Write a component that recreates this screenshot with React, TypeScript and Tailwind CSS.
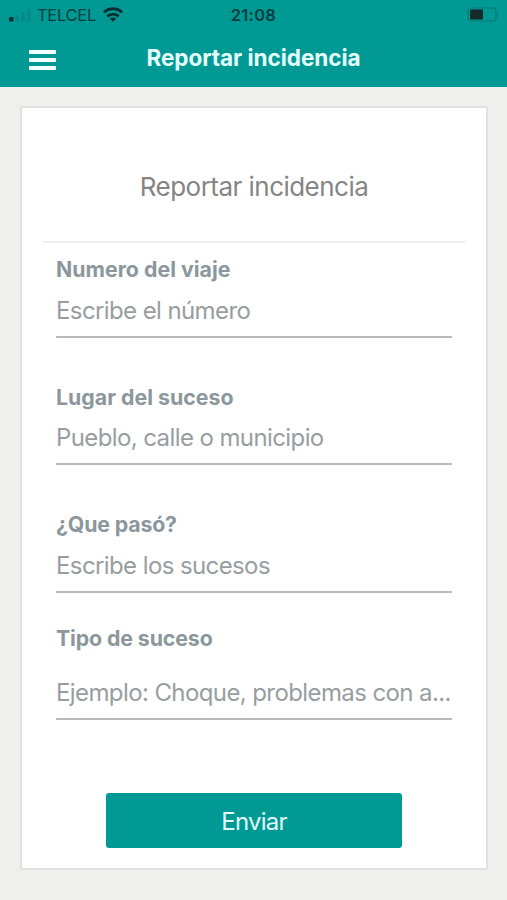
import { clsx } from "clsx";

const fields = [
  {
    id: "viaje",
    label: "Numero del viaje",
    placeholder: "Escribe el número",
    box: "h-[95px]",
    labelClass: "mt-[12px] tracking-[0.02px]",
  },
  {
    id: "lugar",
    label: "Lugar del suceso",
    placeholder: "Pueblo, calle o municipio",
    box: "h-[127px]",
    labelClass: "mt-[45px] tracking-[0.03px]",
  },
  {
    id: "descripcion",
    label: "¿Que pasó?",
    placeholder: "Escribe los sucesos",
    box: "h-[128px]",
    labelClass: "mt-[45px] tracking-[-0.15px]",
  },
  {
    id: "tipo",
    label: "Tipo de suceso",
    placeholder: "Ejemplo: Choque, problemas con a...",
    box: "h-[127px]",
    labelClass: "mt-[31px] tracking-[-0.1px]",
  },
];

function SignalIcon() {
  return (
    <svg width="24" height="14" viewBox="0 0 24 14" fill="#06403d">
      <rect x="1" y="9" width="4.5" height="4.5" rx="1.2" fill="#0b2f2e" />
      <rect x="7" y="7" width="4" height="6.5" rx="1" opacity="0.14" />
      <rect x="13" y="4" width="4" height="9.5" rx="1" opacity="0.14" />
      <rect x="19" y="1" width="4" height="12.5" rx="1" opacity="0.14" />
    </svg>
  );
}

function WifiIcon() {
  return (
    <svg width="20" height="15" viewBox="0 0 20 15" fill="none" stroke="#0a2e2d" strokeWidth="2.9">
      <path d="M1 5.5a12.8 12.8 0 0 1 18 0" />
      <path d="M4.4 9.4a8 8 0 0 1 11.2 0" />
      <path d="M10 14.8 6.9 11.7a4.4 4.4 0 0 1 6.2 0z" fill="#0a2e2d" stroke="none" />
    </svg>
  );
}

function BatteryIcon() {
  return (
    <svg width="32" height="16" viewBox="0 0 32 16" fill="none">
      <rect x="1" y="1" width="28" height="13" rx="3" stroke="#087a75" strokeWidth="1.2" />
      <rect x="3" y="2.5" width="13" height="10" rx="1.2" fill="#172a2a" />
      <path d="M30.6 5.5v4.5" stroke="#08807a" strokeWidth="1.2" />
    </svg>
  );
}

export default function App() {
  return (
    <main className="flex h-[900px] w-[507px] flex-col overflow-hidden bg-[#efefed] font-['Inter','Liberation_Sans',sans-serif]">
      <header className="h-[87px] shrink-0 bg-[#009994] px-2">
        <div className="grid h-[29px] grid-cols-[1fr_auto_1fr] items-center text-[#07403e]">
          <div className="flex items-center">
            <SignalIcon />
            <span className="ml-[5px] text-[16.5px] leading-5 tracking-[-0.3px]">TELCEL</span>
            <span className="ml-[7px]">
              <WifiIcon />
            </span>
          </div>
          <time className="text-[16.5px] leading-5 font-semibold tracking-[0.3px]">21:08</time>
          <div className="flex justify-end">
            <BatteryIcon />
          </div>
        </div>
        <div className="grid h-[58px] grid-cols-[60px_1fr_60px] items-center">
          <button type="button" aria-label="Menú" className="ml-[21px] flex w-[27px] flex-col gap-[4px] pt-[4px]">
            <span className="h-[4px] w-full rounded-[1px] bg-[#f2ffff]" />
            <span className="h-[4px] w-full rounded-[1px] bg-[#f2ffff]" />
            <span className="h-[4px] w-full rounded-[1px] bg-[#f2ffff]" />
          </button>
          <h1 className="-mt-px text-center text-[22.5px] leading-7 font-bold tracking-[-0.04px] whitespace-nowrap text-[#e6ffff]">
            Reportar incidencia
          </h1>
        </div>
      </header>

      <section className="mt-[19px] mr-[19px] ml-[20px] flex h-[764px] flex-col rounded-[3px] border-2 border-[#dfe1e0] bg-white px-[21px]">
        <div className="flex h-[135px] shrink-0 items-center justify-center border-b-2 border-[#eeecec] pt-[25px]">
          <h2 className="text-[26px] leading-8 tracking-[-0.53px] text-[#858585]">Reportar incidencia</h2>
        </div>
        <form className="flex flex-col px-[13px]">
          {fields.map((field) => (
            <div key={field.id} className={clsx("flex flex-col border-b-2 border-[#b9bbbb]", field.box)}>
              <label
                htmlFor={field.id}
                className={clsx("text-[21.3px] leading-7 font-bold text-[#8b979c]", field.labelClass)}
              >
                {field.label}
              </label>
              <input
                id={field.id}
                type="text"
                placeholder={field.placeholder}
                className="mt-auto mb-[9px] h-8 w-full bg-transparent text-[24px] leading-8 tracking-[-0.6px] text-ellipsis outline-none placeholder:text-[#989e9f]"
              />
            </div>
          ))}
          <button
            type="button"
            className="mx-auto mt-[73px] h-[55px] w-[296px] rounded-[3px] bg-[#009994] pt-[2px] text-[24px] leading-8 tracking-[-0.8px] text-[#e0fcfa]"
          >
            Enviar
          </button>
        </form>
      </section>
    </main>
  );
}
